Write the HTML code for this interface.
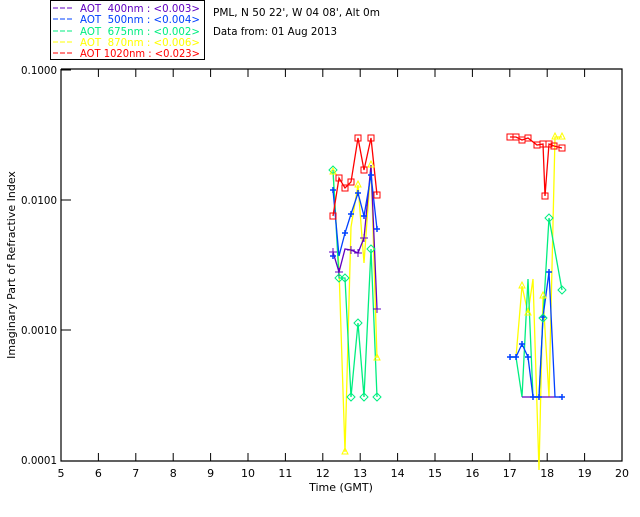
<!DOCTYPE html>
<html><head><style>
html,body{margin:0;padding:0;background:#fff;}
svg text{font-family:"DejaVu Sans","Liberation Sans",sans-serif;font-size:11px;}
</style></head><body>
<svg width="640" height="512" viewBox="0 0 640 512" xmlns="http://www.w3.org/2000/svg">
<rect width="640" height="512" fill="#fff"/>
<rect x="50.5" y="0.5" width="154" height="59" fill="none" stroke="#000"/>
<g font-size="11">
<line x1="53" y1="8" x2="74" y2="8" stroke="#6000c0" stroke-dasharray="5,2"/>
<text x="80" y="12" fill="#6000c0" textLength="120" lengthAdjust="spacingAndGlyphs" xml:space="preserve">AOT  400nm : &lt;0.003&gt;</text>
<line x1="53" y1="19" x2="74" y2="19" stroke="#0040ff" stroke-dasharray="5,2"/>
<text x="80" y="23" fill="#0040ff" textLength="120" lengthAdjust="spacingAndGlyphs" xml:space="preserve">AOT  500nm : &lt;0.004&gt;</text>
<line x1="53" y1="31" x2="74" y2="31" stroke="#00ee80" stroke-dasharray="5,2"/>
<text x="80" y="35" fill="#00ee80" textLength="120" lengthAdjust="spacingAndGlyphs" xml:space="preserve">AOT  675nm : &lt;0.002&gt;</text>
<line x1="53" y1="42" x2="74" y2="42" stroke="#ffff00" stroke-dasharray="5,2"/>
<text x="80" y="46" fill="#ffff00" textLength="120" lengthAdjust="spacingAndGlyphs" xml:space="preserve">AOT  870nm : &lt;0.006&gt;</text>
<line x1="53" y1="53" x2="74" y2="53" stroke="#ff0000" stroke-dasharray="5,2"/>
<text x="80" y="57" fill="#ff0000" textLength="120" lengthAdjust="spacingAndGlyphs" xml:space="preserve">AOT 1020nm : &lt;0.023&gt;</text>
</g>
<text x="213" y="16" fill="#000" textLength="167" lengthAdjust="spacingAndGlyphs">PML, N 50 22', W 04 08', Alt 0m</text>
<text x="213" y="35" fill="#000" textLength="124" lengthAdjust="spacingAndGlyphs">Data from: 01 Aug 2013</text>
<polyline points="61,69 622,69 622,461 61,461 61,69" fill="none" stroke="#000" stroke-width="1.2"/>
<g stroke="#000">
<line x1="61" y1="70" x2="71" y2="70"/><line x1="61" y1="200" x2="71" y2="200"/><line x1="61" y1="330" x2="71" y2="330"/>
<path d="M98.4,461v-8M135.8,461v-8M173.2,461v-8M210.6,461v-8M248,461v-8M285.4,461v-8M322.8,461v-8M360.2,461v-8M397.6,461v-8M435,461v-8M472.4,461v-8M509.8,461v-8M547.2,461v-8M584.6,461v-8"/>
<path d="M98.4,69v8M135.8,69v8M173.2,69v8M210.6,69v8M248,69v8M285.4,69v8M322.8,69v8M360.2,69v8M397.6,69v8M435,69v8M472.4,69v8M509.8,69v8M547.2,69v8M584.6,69v8"/>
</g>
<g text-anchor="end" fill="#000">
<text x="57" y="74" textLength="36" lengthAdjust="spacingAndGlyphs">0.1000</text><text x="57" y="204" textLength="36" lengthAdjust="spacingAndGlyphs">0.0100</text><text x="57" y="334" textLength="36" lengthAdjust="spacingAndGlyphs">0.0010</text><text x="57" y="464" textLength="36" lengthAdjust="spacingAndGlyphs">0.0001</text>
</g>
<g text-anchor="middle" fill="#000">
<text x="61" y="477">5</text><text x="98.4" y="477">6</text><text x="135.8" y="477">7</text><text x="173.2" y="477">8</text><text x="210.6" y="477">9</text><text x="248" y="477">10</text><text x="285.4" y="477">11</text><text x="322.8" y="477">12</text><text x="360.2" y="477">13</text><text x="397.6" y="477">14</text><text x="435" y="477">15</text><text x="472.4" y="477">16</text><text x="509.8" y="477">17</text><text x="547.2" y="477">18</text><text x="584.6" y="477">19</text><text x="622" y="477">20</text>
</g>
<text x="341" y="491" text-anchor="middle" fill="#000">Time (GMT)</text>
<text transform="translate(15,265) rotate(-90)" text-anchor="middle" fill="#000" font-size="10.5">Imaginary Part of Refractive Index</text>
<g fill="none" stroke-width="1.3">
<polyline stroke="#ffff00" points="333,172 339,269 345,452 351,227 358,185 364,263 371,165 377,358"/>
<polyline stroke="#ffff00" points="510,357 516,357 522,286 528,313 533,279 539,470 543,296 549,397 555,137 562,137"/>
<polyline stroke="#00ee80" points="333,170 339,278 345,278 351,397 358,323 364,397 371,249 377,397"/>
<polyline stroke="#00ee80" points="510,357 516,357 522,397 528,279 533,397 539,397 543,318 549,218 562,290"/>
<polyline stroke="#6000c0" points="333,252 339,272 345,249 351,250 358,253 364,238 371,165 377,309"/>
<polyline stroke="#6000c0" points="522,397 549,397 555,397 562,397"/>
<polyline stroke="#0040ff" points="333,190 339,256 345,233 351,214 358,193 364,216 371,175 377,229"/>
<polyline stroke="#0040ff" points="510,357 516,357 522,344 528,357 533,397 539,397 543,317 549,272 555,397 562,397"/>
<polyline stroke="#ff0000" points="333,216 339,178 345,188 351,182 358,138 364,170 371,138 377,195"/>
<polyline stroke="#ff0000" points="510,137 516,137 522,140 528,138 537,145 543,144 545,196 549,144 554,146 562,148"/>
</g>
<g fill="none" stroke-width="1">
<g stroke="#ff0000">
<rect x="330" y="213" width="6" height="6"/><rect x="336" y="175" width="6" height="6"/><rect x="342" y="185" width="6" height="6"/><rect x="348" y="179" width="6" height="6"/><rect x="355" y="135" width="6" height="6"/><rect x="361" y="167" width="6" height="6"/><rect x="368" y="135" width="6" height="6"/><rect x="374" y="192" width="6" height="6"/>
<rect x="507" y="134" width="6" height="6"/><rect x="513" y="134" width="6" height="6"/><rect x="519" y="137" width="6" height="6"/><rect x="525" y="135" width="6" height="6"/><rect x="534" y="142" width="6" height="6"/><rect x="540" y="141" width="6" height="6"/><rect x="542" y="193" width="6" height="6"/><rect x="546" y="141" width="6" height="6"/><rect x="551" y="143" width="6" height="6"/><rect x="559" y="145" width="6" height="6"/>
</g>
<g stroke="#0040ff" stroke-width="1.5">
<path d="M330,190h6M333,187v6M330,256h6M333,253v6M342,233h6M345,230v6M348,214h6M351,211v6M355,193h6M358,190v6M361,216h6M364,213v6M368,175h6M371,172v6M374,229h6M377,226v6"/>
<path d="M507,357h6M510,354v6M513,357h6M516,354v6M519,344h6M522,341v6M525,357h6M528,354v6M530,397h6M533,394v6M536,397h6M539,394v6M540,317h6M543,314v6M546,272h6M549,269v6M559,397h6M562,394v6"/>
</g>
<g stroke="#6000c0"><path d="M329,252h8M333,248v8M335,272h8M339,268v8M347,250h8M351,246v8M354,253h8M358,249v8M360,238h8M364,234v8M373,309h8M377,305v8"/></g>
<g stroke="#00ee80"><path d="M333,166l4,4-4,4-4-4zM339,274l4,4-4,4-4-4zM345,274l4,4-4,4-4-4zM351,393l4,4-4,4-4-4zM358,319l4,4-4,4-4-4zM364,393l4,4-4,4-4-4zM371,245l4,4-4,4-4-4zM377,393l4,4-4,4-4-4zM549,214l4,4-4,4-4-4zM562,286l4,4-4,4-4-4zM543,314l4,4-4,4-4-4z"/></g>
<g stroke="#ffff00"><path d="M333,168l3,6h-6zM345,448l3,6h-6zM358,181l3,6h-6zM371,161l3,6h-6zM377,354l3,6h-6zM522,282l3,6h-6zM528,309l3,6h-6zM543,292l3,6h-6zM555,133l3,6h-6zM562,133l3,6h-6z"/></g>
</g>
</svg>
</body></html>
